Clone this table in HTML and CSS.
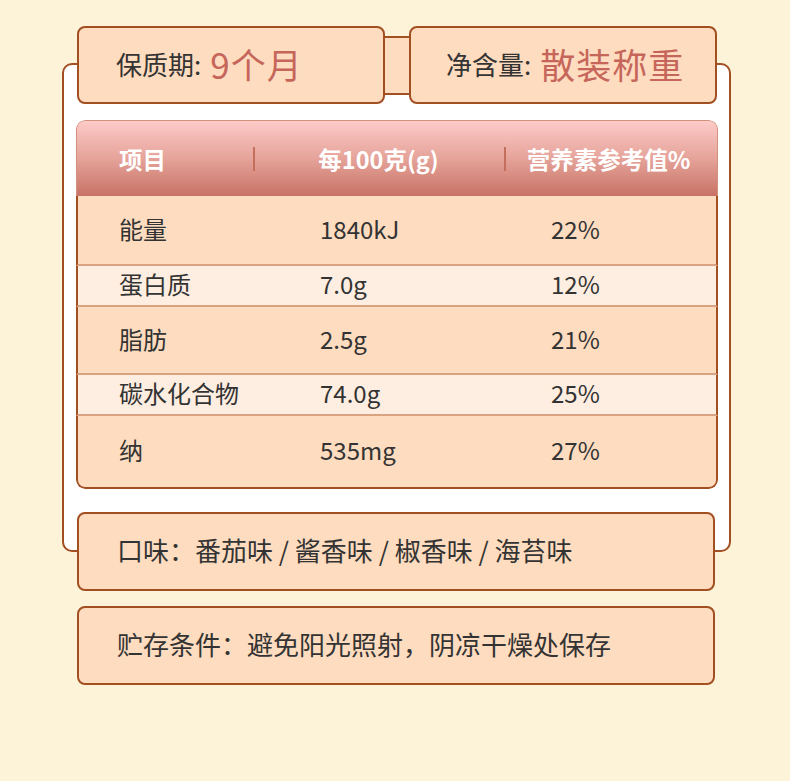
FILE: index.html
```html
<!DOCTYPE html>
<html>
<head>
    <title>产品信息</title>
    <link rel="stylesheet" href="styles.css">
</head>
<body>
    <div class="sheet">
        <div class="top-row">
            <div class="info-box">
                <span class="label">保质期:</span>
                <span class="value">9个月</span>
            </div>
            <div class="connector"></div>
            <div class="info-box">
                <span class="label">净含量:</span>
                <span class="value">散装称重</span>
            </div>
        </div>

        <div class="frame">
            <div class="nutrition">
                <div class="nutrition-head">
                    <div class="col col-name">项目</div>
                    <div class="col col-amount">每100克(g)</div>
                    <div class="col col-nrv">营养素参考值%</div>
                </div>
                <div class="row tall">
                    <div class="col col-name">能量</div>
                    <div class="col col-amount">1840kJ</div>
                    <div class="col col-nrv">22%</div>
                </div>
                <div class="row short">
                    <div class="col col-name">蛋白质</div>
                    <div class="col col-amount">7.0g</div>
                    <div class="col col-nrv">12%</div>
                </div>
                <div class="row mid">
                    <div class="col col-name">脂肪</div>
                    <div class="col col-amount">2.5g</div>
                    <div class="col col-nrv">21%</div>
                </div>
                <div class="row short">
                    <div class="col col-name">碳水化合物</div>
                    <div class="col col-amount">74.0g</div>
                    <div class="col col-nrv">25%</div>
                </div>
                <div class="row last">
                    <div class="col col-name">纳</div>
                    <div class="col col-amount">535mg</div>
                    <div class="col col-nrv">27%</div>
                </div>
            </div>
        </div>

        <div class="note-box flavor">口味：番茄味 / 酱香味 / 椒香味 / 海苔味</div>
        <div class="note-box storage">贮存条件：避免阳光照射，阴凉干燥处保存</div>
    </div>
</body>
</html>
```

FILE: styles.css
```css
* {
    margin: 0;
    padding: 0;
    box-sizing: border-box;
    font-family: 'Noto Sans CJK SC', 'Noto Sans', sans-serif;
}

body {
    background: #fdf3d8;
    width: 790px;
    min-height: 781px;
}

.sheet {
    padding: 26px 0 0 62px;
    width: 731px;
}

.top-row {
    display: flex;
    align-items: center;
    margin-left: 15px;
    width: 640px;
    position: relative;
    z-index: 1;
}

.info-box {
    width: 308px;
    height: 78px;
    background: #fedcbf;
    border: 2px solid #a24f22;
    border-radius: 8px;
    padding: 0 0 4px 37px;
    display: flex;
    align-items: center;
    white-space: nowrap;
}

.info-box + .connector + .info-box {
    padding-left: 35px;
}

.label {
    font-size: 26px;
    color: #333;
    margin-right: 9px;
}

.value {
    font-size: 35px;
    color: #c6665b;
    letter-spacing: 1px;
}

.connector {
    width: 24px;
    height: 59px;
    background: #fedcbf;
    border-top: 2px solid #a24f22;
    border-bottom: 2px solid #a24f22;
}

.frame {
    margin-top: -41px;
    background: white;
    border: 2px solid #a24f22;
    border-radius: 10px;
    padding: 55px 11px 61px 12px;
}

.nutrition {
    width: 642px;
    border-radius: 9px;
    overflow: hidden;
}

.nutrition-head,
.row {
    display: grid;
    grid-template-columns: 176px 251px 215px;
    align-items: center;
}

.nutrition-head {
    height: 76px;
    background: linear-gradient(to bottom, #fdcbc8 0%, #e5a39a 50%, #c87264 100%);
    border: 1px solid #d2917c;
    border-bottom: none;
    border-radius: 9px 9px 0 0;
    color: white;
    font-size: 23.5px;
    font-weight: bold;
}

.nutrition-head .col {
    position: relative;
}

.nutrition-head .col-name {
    padding-left: 42px;
}

.nutrition-head .col-amount,
.nutrition-head .col-nrv {
    text-align: center;
}

.nutrition-head .col-nrv {
    padding-right: 6px;
}

.nutrition-head .col-amount::before,
.nutrition-head .col-nrv::before {
    content: '';
    position: absolute;
    left: 0;
    top: 50%;
    width: 2px;
    height: 24px;
    margin-top: -12px;
    background: #c46f5c;
}

.row {
    background: #fedcbf;
    border-left: 2px solid #a24f22;
    border-right: 2px solid #a24f22;
    border-bottom: 2px solid #d9a382;
    padding-bottom: 4px;
    font-size: 24px;
    color: #333;
}

.row.tall {
    height: 70px;
}

.row.mid {
    height: 68px;
}

.row.short {
    height: 41px;
    background: #feeee1;
}

.row.last {
    height: 73px;
    border-bottom: 2px solid #a24f22;
    border-radius: 0 0 9px 9px;
}

.row .col-name {
    padding-left: 41px;
}

.row .col-amount {
    padding-left: 66px;
}

.row .col-nrv {
    padding-left: 46px;
}

.note-box {
    position: relative;
    margin-left: 15px;
    width: 638px;
    height: 79px;
    background: #fedcbf;
    border: 2px solid #a24f22;
    border-radius: 8px;
    padding: 0 0 4px 38px;
    display: flex;
    align-items: center;
    font-size: 26px;
    color: #333;
}

.flavor {
    margin-top: -40px;
}

.storage {
    margin-top: 15px;
}
```
